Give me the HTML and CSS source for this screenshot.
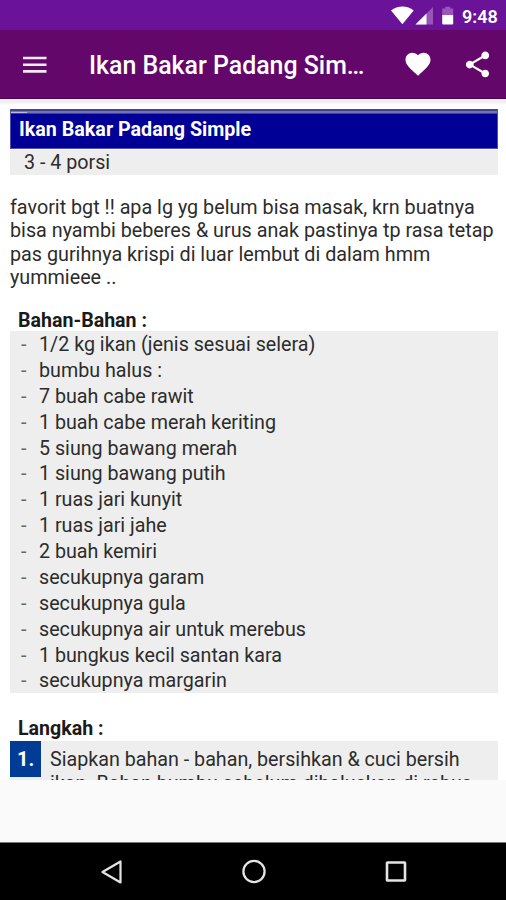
FILE: index.html
```html
<!DOCTYPE html>
<html lang="id">
<head>
<meta charset="utf-8">
<title>Ikan Bakar Padang Simple</title>
<link rel="stylesheet" href="styles.css">
</head>
<body>
<div class="statusbar">
  <svg class="status-icons" width="66" height="20" viewBox="0 0 66 20">
    <path d="M0 4.600C6.600-1 16.400-1 22.700 4.600L11.400 18.200z" fill="#fff"/>
    <path d="M42 1v17.500H24.500z" fill="#9a55b8"/>
    <path d="M35.500 7.500v11h-11z" fill="#fff"/>
    <path d="M51.200 2.500h3V.8h5v1.700h3V9h-11z" fill="#9a55b8"/>
    <path d="M51.200 9h11v8.500q0 1-1 1h-9q-1 0-1-1z" fill="#fff"/>
  </svg>
  <span class="clock">9:48</span>
</div>
<header class="appbar">
  <svg class="menu" width="24" height="18" viewBox="0 0 24 18"><path d="M0 2h23.500M0 8.700h23.500M0 15.400h23.500" stroke="#f7edf8" stroke-width="2.600"/></svg>
  <h1>Ikan Bakar Padang Sim…</h1>
  <svg class="heart" width="30" height="30" viewBox="0 0 24 24"><path fill="#fff" d="M12 21.350l-1.450-1.320C5.400 15.360 2 12.280 2 8.500 2 5.420 4.420 3 7.500 3c1.740 0 3.410.81 4.500 2.090C13.090 3.810 14.760 3 16.500 3 19.580 3 22 5.420 22 8.500c0 3.780-3.400 6.860-8.550 11.540L12 21.350z"/></svg>
  <svg class="share" width="31" height="31" viewBox="0 0 24 24"><path fill="#fff" d="M18 16.080c-.76 0-1.440.3-1.960.77L8.910 12.700c.05-.23.09-.46.09-.7s-.04-.47-.09-.7l7.050-4.110c.54.5 1.250.81 2.040.81 1.660 0 3-1.340 3-3s-1.340-3-3-3-3 1.340-3 3c0 .24.04.47.09.7L8.040 9.810C7.500 9.310 6.790 9 6 9c-1.660 0-3 1.340-3 3s1.340 3 3 3c.79 0 1.500-.31 2.040-.81l7.120 4.160c-.05.21-.08.43-.08.65 0 1.610 1.310 2.920 2.920 2.920s2.920-1.310 2.920-2.920-1.310-2.920-2.920-2.920z"/></svg>
</header>
<main class="content">
  <h2 class="recipe-title">Ikan Bakar Padang Simple</h2>
  <div class="servings">3 - 4 porsi</div>
  <p class="intro">favorit bgt !! apa lg yg belum bisa masak, krn buatnya<br>bisa nyambi beberes &amp; urus anak pastinya tp rasa tetap<br>pas gurihnya krispi di luar lembut di dalam hmm<br>yummieee ..</p>
  <h3 class="ingredients-title">Bahan-Bahan :</h3>
  <ul class="ingredients">
    <li>1/2 kg ikan (jenis sesuai selera)</li>
    <li>bumbu halus :</li>
    <li>7 buah cabe rawit</li>
    <li>1 buah cabe merah keriting</li>
    <li>5 siung bawang merah</li>
    <li>1 siung bawang putih</li>
    <li>1 ruas jari kunyit</li>
    <li>1 ruas jari jahe</li>
    <li>2 buah kemiri</li>
    <li>secukupnya garam</li>
    <li>secukupnya gula</li>
    <li>secukupnya air untuk merebus</li>
    <li>1 bungkus kecil santan kara</li>
    <li>secukupnya margarin</li>
  </ul>
  <h3 class="steps-title">Langkah :</h3>
  <div class="step">
    <span class="step-number">1.</span>
    <p>Siapkan bahan - bahan, bersihkan &amp; cuci bersih<br>ikan. Bahan bumbu sebelum dihaluskan di rebus</p>
  </div>
</main>
<div class="ad-space"></div>
<nav class="navbar">
  <svg width="24" height="26" viewBox="0 0 24 26"><path d="M20.500 2.500v21L2.500 13z" fill="none" stroke="#e4e4e4" stroke-width="2.200" stroke-linejoin="round"/></svg>
  <svg width="26" height="26" viewBox="0 0 26 26"><circle cx="13" cy="12.500" r="10.600" fill="none" stroke="#e4e4e4" stroke-width="2.300"/></svg>
  <svg width="24" height="26" viewBox="0 0 24 26"><rect x="3" y="3.500" width="18" height="18" rx=".5" fill="none" stroke="#e4e4e4" stroke-width="2.600"/></svg>
</nav>
</body>
</html>
```
FILE: styles.css
```css
* { box-sizing: border-box; }
body {
  margin: 0;
  width: 506px;
  height: 900px;
  overflow: hidden;
  display: flex;
  flex-direction: column;
  background: #fafafa;
  font-family: Roboto, "Liberation Sans", sans-serif;
  color: #2c2c2c;
}
h1, h2, h3, p, ul { margin: 0; padding: 0; white-space: nowrap; }
.statusbar {
  flex: none;
  height: 30px;
  background: #6a1399;
  display: flex;
  align-items: flex-start;
  padding: 6px 0 0 391px;
}
.status-icons { flex: none; }
.clock {
  margin-left: 5px;
  font-size: 18px;
  line-height: 21px;
  font-weight: 600;
  color: #fff;
}
.appbar {
  flex: none;
  height: 69px;
  background: #64076b;
  border-bottom: 1px solid #4c0452;
  display: flex;
  align-items: center;
  padding-left: 23px;
  color: #fff;
}
.menu { margin-top: 1px; }
h1 {
  width: 313px;
  padding: 4px 0 0 42px;
  font-size: 24.900px;
  line-height: 30px;
  font-weight: 500;
}
.heart { margin-left: 42.500px; }
.share { margin-left: 29px; }
.content {
  flex: none;
  height: 681px;
  overflow: hidden;
  padding: 10px 8px 0 10px;
  background: linear-gradient(#eee, #eee 3px, #fff 6px);
}
.recipe-title {
  height: 40px;
  border: 1px solid #4e4eae;
  border-top: 0;
  background:
    linear-gradient(#b9b9e2, #b9b9e2) 0 3px / 16px 1px no-repeat,
    linear-gradient(#44448c 2px, #7474b4 2px, #7474b4 4px, #4040a0 4px, #4040a0 5px, #000096 5px);
  color: #fff;
  padding: 4px 0 0 8px;
  font-size: 19.700px;
  line-height: 33px;
  font-weight: 700;
}
.servings {
  margin-top: 1px;
  height: 25px;
  padding-left: 14px;
  background: #eee;
  font-size: 19.700px;
  line-height: 26px;
}
.intro {
  margin-top: 20px;
  font-size: 19.750px;
  line-height: 23.400px;
  padding-top: 1px;
}
h3 {
  padding-left: 8px;
  font-size: 19.600px;
  line-height: 24px;
  font-weight: 700;
  color: #1a1a1a;
}
.ingredients-title {
  height: 23.400px;
  margin-top: 18px;
  line-height: 26px;
}
.ingredients {
  height: 362px;
  padding-top: 1px;
  background: #eee;
  list-style: none;
  font-size: 19.700px;
  line-height: 25.870px;
}
.ingredients li { display: flex; }
.ingredients li::before {
  content: "-";
  width: 18px;
  margin-left: 11px;
  color: #666;
}
.steps-title { margin-top: 24px; }
.step {
  display: flex;
  height: 60px;
  background: #eee;
  font-size: 19.700px;
  line-height: 23.500px;
}
.step-number {
  width: 31px;
  height: 36px;
  padding-left: 7px;
  background: #003c96;
  color: #fff;
  font-size: 20px;
  font-weight: 700;
  line-height: 37px;
}
.step p { padding: 7px 0 0 9px; }
.ad-space { flex: 1; }
.navbar {
  flex: none;
  height: 58px;
  background: #000;
  border-top: 1px solid #777;
  display: flex;
  justify-content: space-between;
  align-items: center;
  padding: 0 98px 0 100px;
}
```
